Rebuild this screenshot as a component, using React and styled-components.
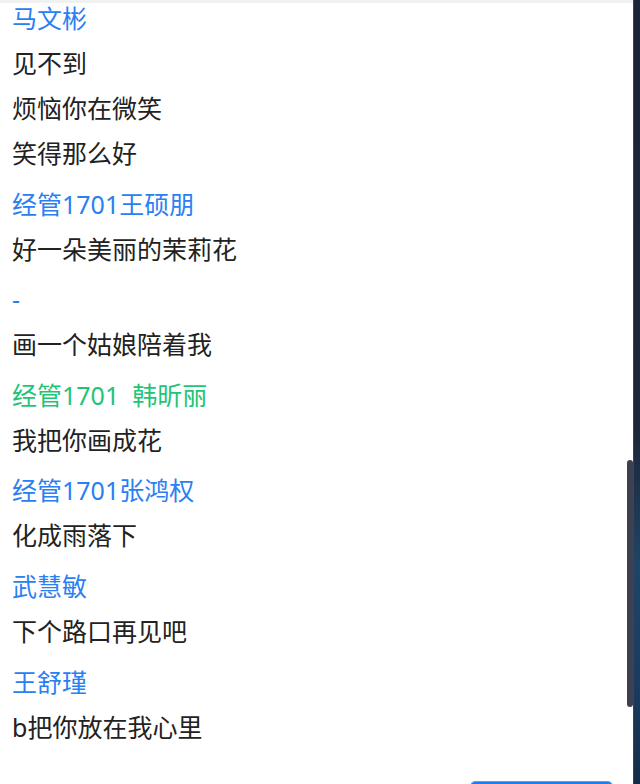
import React from "react";
import styled, { createGlobalStyle } from "styled-components";

const GlobalStyle = createGlobalStyle`
  html, body { margin: 0; padding: 0; background: #ffffff; }
  body { font-family: "Noto Sans", "Noto Sans CJK SC", sans-serif; }
`;

const Page = styled.div`
  display: flex;
  width: 640px;
  height: 784px;
  overflow: hidden;
`;

const Panel = styled.div`
  position: relative;
  flex: 1;
  display: flex;
  flex-direction: column;
  background: #ffffff;
  min-width: 0;
`;

const Edge = styled.div`
  width: 7px;
  flex: none;
  background: linear-gradient(180deg, #1c2437 0%, #1d2639 55%, #1f4466 72%, #1a3b5e 88%, #142b48 100%);
  box-shadow: inset 1px 0 0 #3a4458;
`;

const TopShade = styled.div`
  position: absolute;
  top: 0;
  left: 0;
  right: 0;
  height: 3px;
  background: #f1f1f1;
  z-index: 1;
`;

const Viewport = styled.div`
  position: relative;
  height: 771px;
  flex: none;
  overflow: hidden;
`;

const List = styled.div`
  display: flex;
  flex-direction: column;
  padding-left: 12px;
`;

const Name = styled.div`
  margin-top: 4.6px;
  height: 46px;
  line-height: 46px;
  font-size: 25px;
  color: ${(p) => (p.$green ? "#1fc476" : "#2a80f2")};
  white-space: pre;

  &:first-child {
    margin-top: 0;
    height: 36px;
    line-height: 36px;
    padding-bottom: 5.1px;
  }
`;

const Msg = styled.div`
  height: 45px;
  line-height: 45px;
  font-size: 25px;
  color: #222222;
`;

const Thumb = styled.div`
  position: absolute;
  right: 0;
  top: 460px;
  width: 6px;
  height: 247px;
  border-radius: 3px;
  background: #3c4050;
`;

const Footer = styled.div`
  display: flex;
  justify-content: flex-end;
  padding: 10px 20px 0 0;
`;

const Button = styled.button`
  width: 143px;
  height: 40px;
  border: none;
  border-radius: 6px;
  background: #1f7cf0;
  box-shadow: inset 0 1px 0 #5aa2f7;
  flex: none;
`;

const groups = [
  { name: "马文彬", msgs: ["见不到", "烦恼你在微笑", "笑得那么好"] },
  { name: "经管1701王硕朋", msgs: ["好一朵美丽的茉莉花"] },
  { name: "-", msgs: ["画一个姑娘陪着我"] },
  { name: "经管1701\u00a0\u00a0韩昕丽", green: true, msgs: ["我把你画成花"] },
  { name: "经管1701张鸿权", msgs: ["化成雨落下"] },
  { name: "武慧敏", msgs: ["下个路口再见吧"] },
  { name: "王舒瑾", msgs: ["b把你放在我心里"] },
];

export default function App() {
  return (
    <>
      <GlobalStyle />
      <Page>
        <Panel>
          <TopShade />
          <Viewport>
            <List>
              {groups.map((g, i) => (
                <React.Fragment key={i}>
                  <Name $green={g.green}>{g.name}</Name>
                  {g.msgs.map((m, j) => (
                    <Msg key={j}>{m}</Msg>
                  ))}
                </React.Fragment>
              ))}
            </List>
            <Thumb />
          </Viewport>
          <Footer>
            <Button />
          </Footer>
        </Panel>
        <Edge />
      </Page>
    </>
  );
}
